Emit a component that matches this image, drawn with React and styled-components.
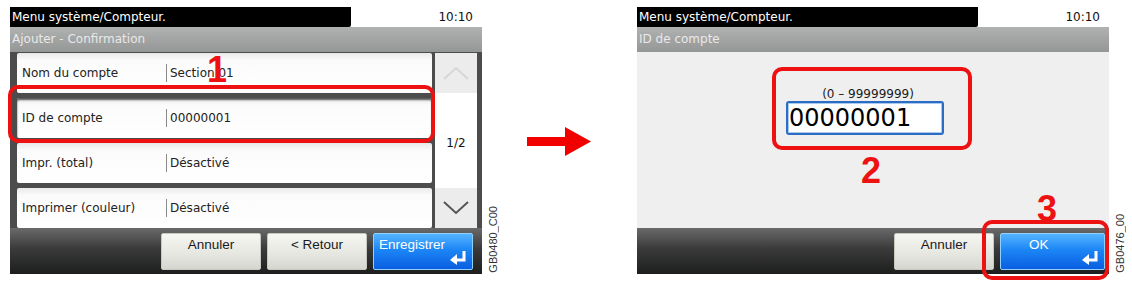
import React from 'react';
import styled, { createGlobalStyle } from 'styled-components';

const GlobalStyle = createGlobalStyle`
	html, body {
		margin: 0;
		padding: 0;
		background: #ffffff;
	}
	body {
		font-family: 'DejaVu Sans', Verdana, sans-serif;
		font-size: 12px;
		color: #222222;
	}
`;

const Page = styled.div`
	display: flex;
	flex-direction: row;
	align-items: flex-start;
	padding: 7px 0 0 10px;
	width: 1132px;
	height: 284px;
	box-sizing: border-box;
`;

const Figure = styled.div`
	display: flex;
	flex-direction: row;
	align-items: flex-end;
`;

const Screen = styled.div`
	position: relative;
	display: flex;
	flex-direction: column;
	width: 472px;
	height: 267px;
`;

const TitleBar = styled.div`
	display: flex;
	flex-direction: row;
	height: 20px;
	line-height: 20px;
`;

const TitleText = styled.div`
	width: 341px;
	background: #000000;
	color: #ffffff;
	padding-left: 2px;
	box-sizing: border-box;
	border-radius: 0 0 2px 0;
`;

const Clock = styled.div`
	flex: 1;
	text-align: right;
	padding-right: 9px;
	color: #111111;
`;

const SubBar = styled.div`
	height: 25px;
	line-height: 24px;
	padding-left: 2px;
	background: linear-gradient(#b0b1b1, #959696);
	color: #e9e9e9;
`;

const ListArea = styled.div`
	display: flex;
	flex-direction: row;
	height: 176px;
	background: #4c4c4c;
	padding: 1px 5px 0 7px;
	box-sizing: border-box;
	gap: 3px;
`;

const Rows = styled.div`
	flex: 1;
	display: flex;
	flex-direction: column;
	gap: 5px;
`;

const Row = styled.div`
	display: flex;
	flex-direction: row;
	align-items: center;
	height: 40px;
	flex-shrink: 0;
	background: linear-gradient(#e9e9e9, #fbfbfb 18%, #ffffff);
	border-radius: 2px;
	box-shadow: ${(p) => (p.$pressed ? 'inset 0 2px 2px #555555' : 'none')};
`;

const RowLabel = styled.div`
	width: 149px;
	padding-left: 5px;
	box-sizing: border-box;
	white-space: nowrap;
`;

const RowValue = styled.div`
	border-left: 1px solid #8a8a8a;
	padding-left: 3px;
	line-height: 18px;
	white-space: nowrap;
`;

const ScrollColumn = styled.div`
	width: 42px;
	display: flex;
	flex-direction: column;
	background: #ffffff;
`;

const ScrollButton = styled.div`
	height: 40px;
	display: flex;
	align-items: center;
	justify-content: center;
	background: #ececec;
	flex-shrink: 0;
`;

const PageCount = styled.div`
	flex: 1;
	display: flex;
	align-items: center;
	justify-content: center;
	padding-top: 4px;
	color: #111111;
`;

const BottomBar = styled.div`
	display: flex;
	flex-direction: row;
	justify-content: flex-end;
	gap: 6px;
	height: 46px;
	padding: 5px ${(p) => p.$padRight || 9}px 0 0;
	box-sizing: border-box;
	background: linear-gradient(#6a6a6a, #3a3a3a 45%, #1c1f1d);
`;

const Button = styled.div`
	position: relative;
	width: ${(p) => p.$width || 100}px;
	height: 37px;
	box-sizing: border-box;
	border-radius: 2px;
	padding-top: 3px;
	font-family: 'Liberation Sans', Arial, sans-serif;
	font-size: 13.5px;
	line-height: 15px;
	text-align: ${(p) => p.$align || 'center'};
	padding-left: ${(p) => p.$padLeft || 0}px;
	color: ${(p) => (p.$primary ? '#ffffff' : '#1a1a1a')};
	background: ${(p) =>
		p.$primary
			? 'linear-gradient(#55b4ff, #1c86f6 45%, #0a5ee0)'
			: 'linear-gradient(#f6f6f2, #e6e6e0 60%, #d6d6d0)'};
	border: 1px solid ${(p) => (p.$primary ? '#8fd0ff' : '#c8c8c0')};
`;

const EnterIcon = styled.svg`
	position: absolute;
	right: 5px;
	bottom: 4px;
`;

const EntryArea = styled.div`
	display: flex;
	flex-direction: column;
	align-items: center;
	height: 176px;
	padding: 35px 16px 0 0;
	box-sizing: border-box;
	background: #efefef;
`;

const RangeText = styled.div`
	line-height: 14px;
	color: #1a1a1a;
	padding-left: 6px;
`;

const NumberInput = styled.div`
	width: 158px;
	height: 34px;
	box-sizing: border-box;
	border: 2px solid #2b6cc4;
	border-radius: 3px;
	background: #ffffff;
	box-shadow: inset 0 0 0 1px #a9c9ee;
	font-size: 24px;
	line-height: 30px;
	padding-left: 1px;
	color: #000000;
`;

const Callout = styled.div`
	position: absolute;
	left: ${(p) => p.$x}px;
	top: ${(p) => p.$y}px;
	width: ${(p) => p.$w}px;
	height: ${(p) => p.$h}px;
	border: 4px solid #ee1111;
	border-radius: 10px;
	box-sizing: border-box;
	pointer-events: none;
`;

const StepNumber = styled.div`
	position: absolute;
	left: ${(p) => p.$x}px;
	top: ${(p) => p.$y}px;
	font-family: 'Liberation Sans', Arial, sans-serif;
	font-weight: bold;
	font-size: 36px;
	line-height: 1;
	color: #ee1111;
`;

const FigureCode = styled.div`
	writing-mode: vertical-rl;
	transform: rotate(180deg);
	font-family: 'Liberation Sans', Arial, sans-serif;
	font-size: 11px;
	color: #333333;
	margin: 0 0 1px 5px;
`;

const ArrowSlot = styled.div`
	display: flex;
	align-items: center;
	width: 138px;
	height: 267px;
	padding: 3px 0 0 28px;
	box-sizing: border-box;
`;

const Chevron = ({ up, color }) => (
	<svg width="26" height="16" viewBox="0 0 26 16">
		<polyline
			points={up ? '1,14 13,3 25,14' : '1,2 13,13 25,2'}
			fill="none"
			stroke={color}
			strokeWidth="2"
		/>
	</svg>
);

const Enter = () => (
	<EnterIcon width="17" height="15" viewBox="0 0 17 15">
		<path d="M14 1 V10 H6" fill="none" stroke="#ffffff" strokeWidth="3" />
		<polygon points="0,10 7,4 7,15" fill="#ffffff" />
	</EnterIcon>
);

const rows = [
	{ label: 'Nom du compte', value: 'Section 01' },
	{ label: 'ID de compte', value: '00000001', pressed: true },
	{ label: 'Impr. (total)', value: 'Désactivé' },
	{ label: 'Imprimer (couleur)', value: 'Désactivé' }
];

function ConfirmScreen() {
	return (
		<Screen>
			<TitleBar>
				<TitleText>Menu système/Compteur.</TitleText>
				<Clock>10:10</Clock>
			</TitleBar>
			<SubBar>Ajouter - Confirmation</SubBar>
			<ListArea>
				<Rows>
					{rows.map((row) => (
						<Row key={row.label} $pressed={row.pressed}>
							<RowLabel>{row.label}</RowLabel>
							<RowValue>{row.value}</RowValue>
						</Row>
					))}
				</Rows>
				<ScrollColumn>
					<ScrollButton>
						<Chevron up color="#d6d6d6" />
					</ScrollButton>
					<PageCount>1/2</PageCount>
					<ScrollButton>
						<Chevron color="#555555" />
					</ScrollButton>
				</ScrollColumn>
			</ListArea>
			<BottomBar>
				<Button>Annuler</Button>
				<Button>&lt; Retour</Button>
				<Button $primary $align="left" $padLeft={5}>
					Enregistrer
					<Enter />
				</Button>
			</BottomBar>
			<Callout $x={-2} $y={78} $w={427} $h={58} />
			<StepNumber $x={197} $y={45}>1</StepNumber>
		</Screen>
	);
}

function AccountIdScreen() {
	return (
		<Screen>
			<TitleBar>
				<TitleText>Menu système/Compteur.</TitleText>
				<Clock>10:10</Clock>
			</TitleBar>
			<SubBar>ID de compte</SubBar>
			<EntryArea>
				<RangeText>(0 – 99999999)</RangeText>
				<NumberInput>00000001</NumberInput>
			</EntryArea>
			<BottomBar $padRight={4}>
				<Button>Annuler</Button>
				<Button $primary $width={105} $align="left" $padLeft={28}>
					OK
					<Enter />
				</Button>
			</BottomBar>
			<Callout $x={345} $y={213} $w={127} $h={60} />
			<Callout $x={135} $y={60} $w={200} $h={83} />
			<StepNumber $x={224} $y={146}>2</StepNumber>
			<StepNumber $x={400} $y={184}>3</StepNumber>
		</Screen>
	);
}

export default function App() {
	return (
		<>
			<GlobalStyle />
			<Page>
				<Figure>
					<ConfirmScreen />
					<FigureCode>GB0480_C00</FigureCode>
				</Figure>
				<ArrowSlot>
					<svg width="64" height="30" viewBox="0 0 64 30">
						<rect x="0" y="10" width="40" height="9" fill="#f20000" />
						<polygon points="38,0 64,14.5 38,29" fill="#f20000" />
					</svg>
				</ArrowSlot>
				<Figure>
					<AccountIdScreen />
					<FigureCode>GB0476_00</FigureCode>
				</Figure>
			</Page>
		</>
	);
}
